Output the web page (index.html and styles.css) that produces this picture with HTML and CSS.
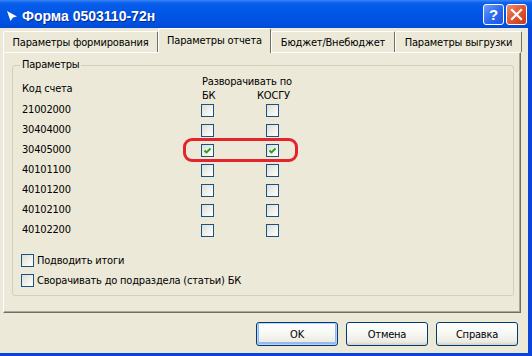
FILE: index.html
```html
<!DOCTYPE html>
<html lang="ru">
<head>
<meta charset="utf-8">
<title>Форма 0503110-72н</title>
<link rel="stylesheet" href="styles.css">
</head>
<body>
<div class="window">
  <div class="titlebar">
    <svg class="app-icon" width="12" height="12" viewBox="0 0 12 12"><path d="M1 1 L11 6.5 L7 7.5 L4.5 11 Z" fill="#fff"/></svg>
    <span class="title">Форма 0503110-72н</span>
    <div class="caption-btns">
      <span class="cap-btn help">?</span>
      <span class="cap-btn close"><svg width="19" height="19" viewBox="0 0 19 19"><path d="M5 5 L14 14 M14 5 L5 14" stroke="#fff" stroke-width="2.2" stroke-linecap="square"/></svg></span>
    </div>
  </div>
  <div class="body">
    <div class="tabs">
      <div class="tab t1">Параметры формирования</div>
      <div class="tab t2 active">Параметры отчета</div>
      <div class="tab t3">Бюджет/Внебюджет</div>
      <div class="tab t4">Параметры выгрузки</div>
    </div>
    <div class="panel">
      <fieldset class="group">
        <legend>Параметры</legend>
        <div class="grid">
          <div class="hd-code">Код счета</div>
          <div class="hd-expand">Разворачивать по</div>
          <div class="hd-bk">БК</div>
          <div class="hd-kosgu">КОСГУ</div>

          <div class="code">21002000</div><span class="cb"></span><span class="cb"></span>
          <div class="code">30404000</div><span class="cb"></span><span class="cb"></span>
          <div class="code">30405000</div><span class="cb checked"><svg width="11" height="11" viewBox="0 0 11 11"><path d="M2.5 5.5 L4.5 7.5 L8.5 3.5" fill="none" stroke="#21A121" stroke-width="1.8"/></svg></span><span class="cb checked"><svg width="11" height="11" viewBox="0 0 11 11"><path d="M2.5 5.5 L4.5 7.5 L8.5 3.5" fill="none" stroke="#21A121" stroke-width="1.8"/></svg></span>
          <div class="code">40101100</div><span class="cb"></span><span class="cb"></span>
          <div class="code">40101200</div><span class="cb"></span><span class="cb"></span>
          <div class="code">40102100</div><span class="cb"></span><span class="cb"></span>
          <div class="code">40102200</div><span class="cb"></span><span class="cb"></span>
        </div>
        <div class="opts">
          <div class="opt"><span class="cb"></span><span>Подводить итоги</span></div>
          <div class="opt"><span class="cb"></span><span>Сворачивать до подраздела (статьи) БК</span></div>
        </div>
      </fieldset>
    </div>
    <div class="buttons">
      <button class="btn default">OK</button>
      <button class="btn">Отмена</button>
      <button class="btn">Справка</button>
    </div>
  </div>
  <div class="annot"></div>
</div>
</body>
</html>
```

FILE: styles.css
```css
html, body {
  margin: 0;
  padding: 0;
}
body {
  width: 532px;
  height: 356px;
  overflow: hidden;
  font-family: "DejaVu Sans Condensed", "Liberation Sans", Arial, sans-serif;
  font-size: 11px;
  letter-spacing: -0.2px;
  color: #000;
  background: #ECE9D8;
}
.window {
  position: relative;
  width: 532px;
  height: 356px;
  display: flex;
  flex-direction: column;
}
.titlebar {
  height: 28px;
  flex: none;
  display: flex;
  align-items: center;
  padding-left: 6px;
  box-sizing: border-box;
  background: linear-gradient(#3A86F6 0px, #0A5FEC 3px, #0056E6 12px, #0052E2 22px, #0049D6 28px);
}
.app-icon {
  flex: none;
  margin-top: 3px;
}
.title {
  margin-left: 4px;
  padding-top: 4px;
  color: #fff;
  font-family: "Liberation Sans", Arial, sans-serif;
  font-weight: bold;
  font-size: 14px;
  letter-spacing: 0;
  text-shadow: 1px 1px 0 #0A2A8A;
  white-space: nowrap;
}
.caption-btns {
  margin-left: auto;
  padding-right: 5px;
  display: flex;
  gap: 2px;
}
.cap-btn {
  width: 21px;
  height: 21px;
  box-sizing: border-box;
  border: 1px solid #fff;
  border-radius: 3px;
  display: flex;
  align-items: center;
  justify-content: center;
  color: #fff;
}
.help {
  background: linear-gradient(135deg, #6FA0FA 0%, #2F6CF0 50%, #1A55E0 100%);
  font-family: "Liberation Sans", Arial, sans-serif;
  font-weight: bold;
  font-size: 15px;
  letter-spacing: 0;
  line-height: 19px;
}
.close {
  background: linear-gradient(135deg, #EE8E72 0%, #E2552F 50%, #C9381A 100%);
}
.body {
  flex: 1;
  display: flex;
  flex-direction: column;
  border-right: 4px solid #0A44DA;
  border-bottom: 3px solid #0A44DA;
  background: #ECE9D8;
}
.tabs {
  height: 24px;
  flex: none;
  display: flex;
  align-items: flex-end;
  padding-left: 3px;
}
.tab {
  height: 21px;
  box-sizing: border-box;
  border-top: 1px solid #fff;
  border-left: 1px solid #fff;
  border-right: 1px solid #716F64;
  border-radius: 2px 2px 0 0;
  padding-top: 1px;
  line-height: 19px;
  text-align: center;
  white-space: nowrap;
  background: #ECE9D8;
}
.t1 { width: 155px; }
.t2 { width: 113px; }
.t3 { width: 124px; }
.t4 { width: 127px; }
.tab.active {
  position: relative;
  z-index: 1;
  height: 25px;
  margin-bottom: -1px;
  padding-top: 0;
  line-height: 24px;
}
.panel {
  margin-left: 3px;
  width: 518px;
  height: 261px;
  flex: none;
  box-sizing: border-box;
  border-top: 1px solid #fff;
  border-left: 1px solid #fff;
  border-right: 1px solid #716F64;
  border-bottom: 1px solid #716F64;
  box-shadow: inset -1px -1px 0 #ACA899;
  padding: 5px 0 0 8px;
}
.group {
  margin: 0;
  width: 502px;
  min-width: 0;
  box-sizing: border-box;
  border: 1px solid #D0D0BF;
  border-radius: 3px;
  padding: 2px 0 5px 9px;
}
.group legend {
  padding: 0 2px;
  margin-left: -2px;
  line-height: 14px;
}
.grid {
  display: grid;
  grid-template-columns: 179px 65px 1fr;
  grid-template-rows: 15px 11px repeat(7, 20px);
}
.hd-code {
  grid-column: 1;
  grid-row: 1 / 3;
  align-self: center;
  line-height: 13px;
  padding-top: 3px;
}
.hd-expand {
  grid-column: 2 / 4;
  grid-row: 1;
  line-height: 13px;
  margin-top: 1px;
  margin-left: 1px;
  white-space: nowrap;
}
.hd-bk {
  grid-column: 2;
  grid-row: 2;
  line-height: 13px;
  margin-left: 1px;
  align-self: start;
}
.hd-kosgu {
  grid-column: 3;
  grid-row: 2;
  line-height: 13px;
  margin-left: -9px;
  align-self: start;
}
.code {
  grid-column: 1;
  line-height: 20px;
}
.cb {
  width: 13px;
  height: 13px;
  box-sizing: border-box;
  border: 1px solid #1C5180;
  background: linear-gradient(135deg, #DCDCD7 0%, #F2F2EE 60%, #FFFFFF 100%);
  align-self: center;
  justify-self: start;
  display: flex;
  flex: none;
}
.opts {
  margin-top: 10px;
}
.opt {
  height: 20px;
  display: flex;
  align-items: center;
  gap: 3px;
  white-space: nowrap;
}
.opt .cb {
  margin-left: -1px;
}
.buttons {
  display: flex;
  justify-content: flex-end;
  gap: 8px;
  padding: 9px 10px 0 0;
}
.btn {
  width: 82px;
  height: 24px;
  box-sizing: border-box;
  margin: 0;
  padding: 0;
  border: 1px solid #003C74;
  border-radius: 3px;
  background: linear-gradient(#FFFFFF 0%, #F7F7F3 50%, #ECEBE3 85%, #D6D0C5 100%);
  font-family: "DejaVu Sans Condensed", "Liberation Sans", Arial, sans-serif;
  font-size: 11px;
  letter-spacing: -0.2px;
  color: #000;
}
.btn.default {
  box-shadow: inset 0 0 0 1px #BCD2FA, inset 0 -1px 0 2px #9AB8F0;
}
.annot {
  position: absolute;
  left: 183px;
  top: 138px;
  width: 115px;
  height: 24px;
  box-sizing: border-box;
  border: 3px solid #E3252B;
  border-radius: 9px;
}
```
